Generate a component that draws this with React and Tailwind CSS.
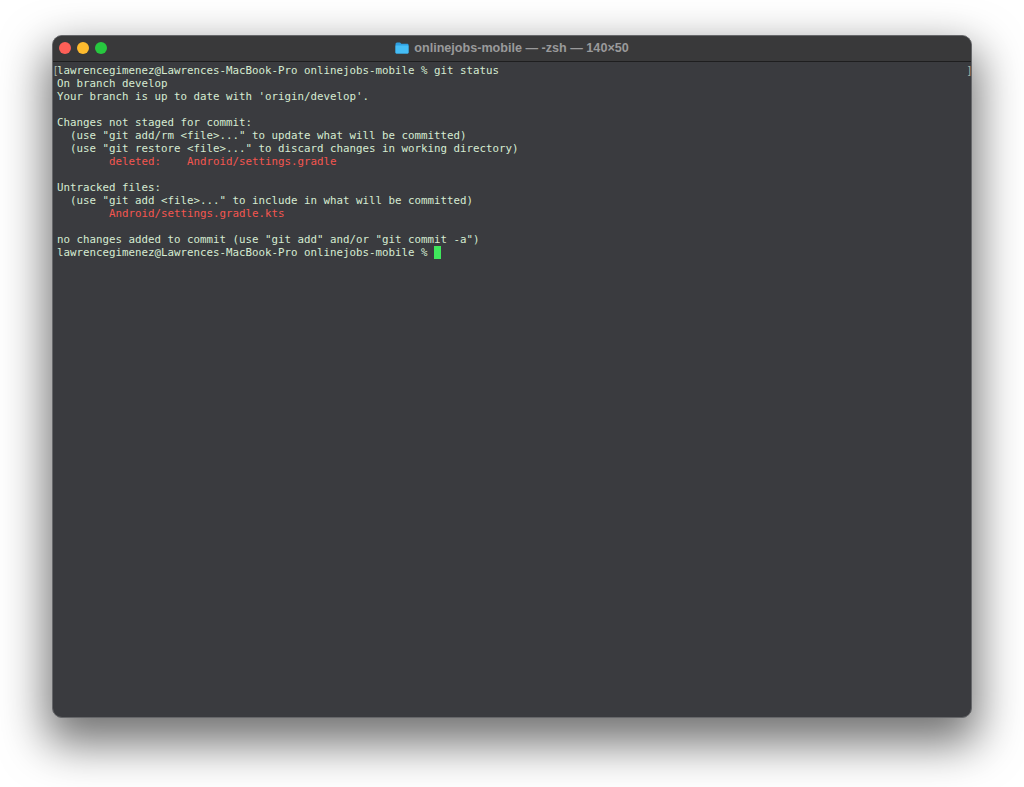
const lines = [
  { text: "On branch develop" },
  { text: "Your branch is up to date with 'origin/develop'." },
  { text: "" },
  { text: "Changes not staged for commit:" },
  { text: '  (use "git add/rm <file>..." to update what will be committed)' },
  { text: '  (use "git restore <file>..." to discard changes in working directory)' },
  { text: "        deleted:    Android/settings.gradle", red: true },
  { text: "" },
  { text: "Untracked files:" },
  { text: '  (use "git add <file>..." to include in what will be committed)' },
  { text: "        Android/settings.gradle.kts", red: true },
  { text: "" },
  { text: 'no changes added to commit (use "git add" and/or "git commit -a")' },
];

function FolderIcon() {
  return (
    <svg width="14" height="12" viewBox="0 0 14 12">
      <path d="M0.5 2 Q0.5 0.5 2 0.5 H5 L6.3 1.8 H12.5 Q13.5 1.8 13.5 3 V10.5 Q13.5 11.5 12.5 11.5 H1.5 Q0.5 11.5 0.5 10.5 Z" fill="#2f9fe0" />
      <path d="M0.5 3.4 H13.5 V10.5 Q13.5 11.5 12.5 11.5 H1.5 Q0.5 11.5 0.5 10.5 Z" fill="#45bdf5" />
    </svg>
  );
}

export default function App() {
  return (
    <div className="h-[787px] w-[1024px] overflow-hidden bg-white pl-[52px] pt-[35px]">
      <div className="flex h-[683px] w-[920px] flex-col overflow-hidden rounded-[10px] border border-[#66676a] bg-[#3a3b3f] shadow-[0_20px_45px_6px_rgba(0,0,0,0.55)]">
        <div className="relative flex h-[26px] shrink-0 items-center justify-center border-b border-[#1e1e1f] bg-[#39393a]">
          <div className="absolute left-[6px] top-[6px] flex gap-[6px]">
            <span className="h-[12px] w-[12px] rounded-full bg-[#fe5f57]" />
            <span className="h-[12px] w-[12px] rounded-full bg-[#febb2e]" />
            <span className="h-[12px] w-[12px] rounded-full bg-[#27c83f]" />
          </div>
          <div className="flex items-center gap-[5px] font-['Liberation_Sans',sans-serif] text-[12.6px] font-bold text-[#9a9a9b]">
            <FolderIcon />
            <span>onlinejobs-mobile — -zsh — 140×50</span>
          </div>
        </div>
        <div className="whitespace-pre pt-[2px] font-['DejaVu_Sans_Mono',monospace] text-[10.8px] leading-[13px] text-[#d6ebd2]">
          <div className="flex h-[13px] items-center justify-between pl-[1px]">
            <div className="flex">
              <span className="font-['Liberation_Sans',sans-serif] text-[#aab5a7]">[</span>
              <span>lawrencegimenez@Lawrences-MacBook-Pro onlinejobs-mobile % git status</span>
            </div>
            <span className="font-['Liberation_Sans',sans-serif] text-[#aab5a7]">]</span>
          </div>
          {lines.map((l, i) => (
            <div key={i} className={`h-[13px] pl-[4px] ${l.red ? "text-[#f4564f]" : ""}`}>
              {l.text}
            </div>
          ))}
          <div className="flex h-[13px] items-center pl-[4px]">
            <span>lawrencegimenez@Lawrences-MacBook-Pro onlinejobs-mobile % </span>
            <span className="h-[13px] w-[6.5px] bg-[#3fe85c]" />
          </div>
        </div>
      </div>
    </div>
  );
}
